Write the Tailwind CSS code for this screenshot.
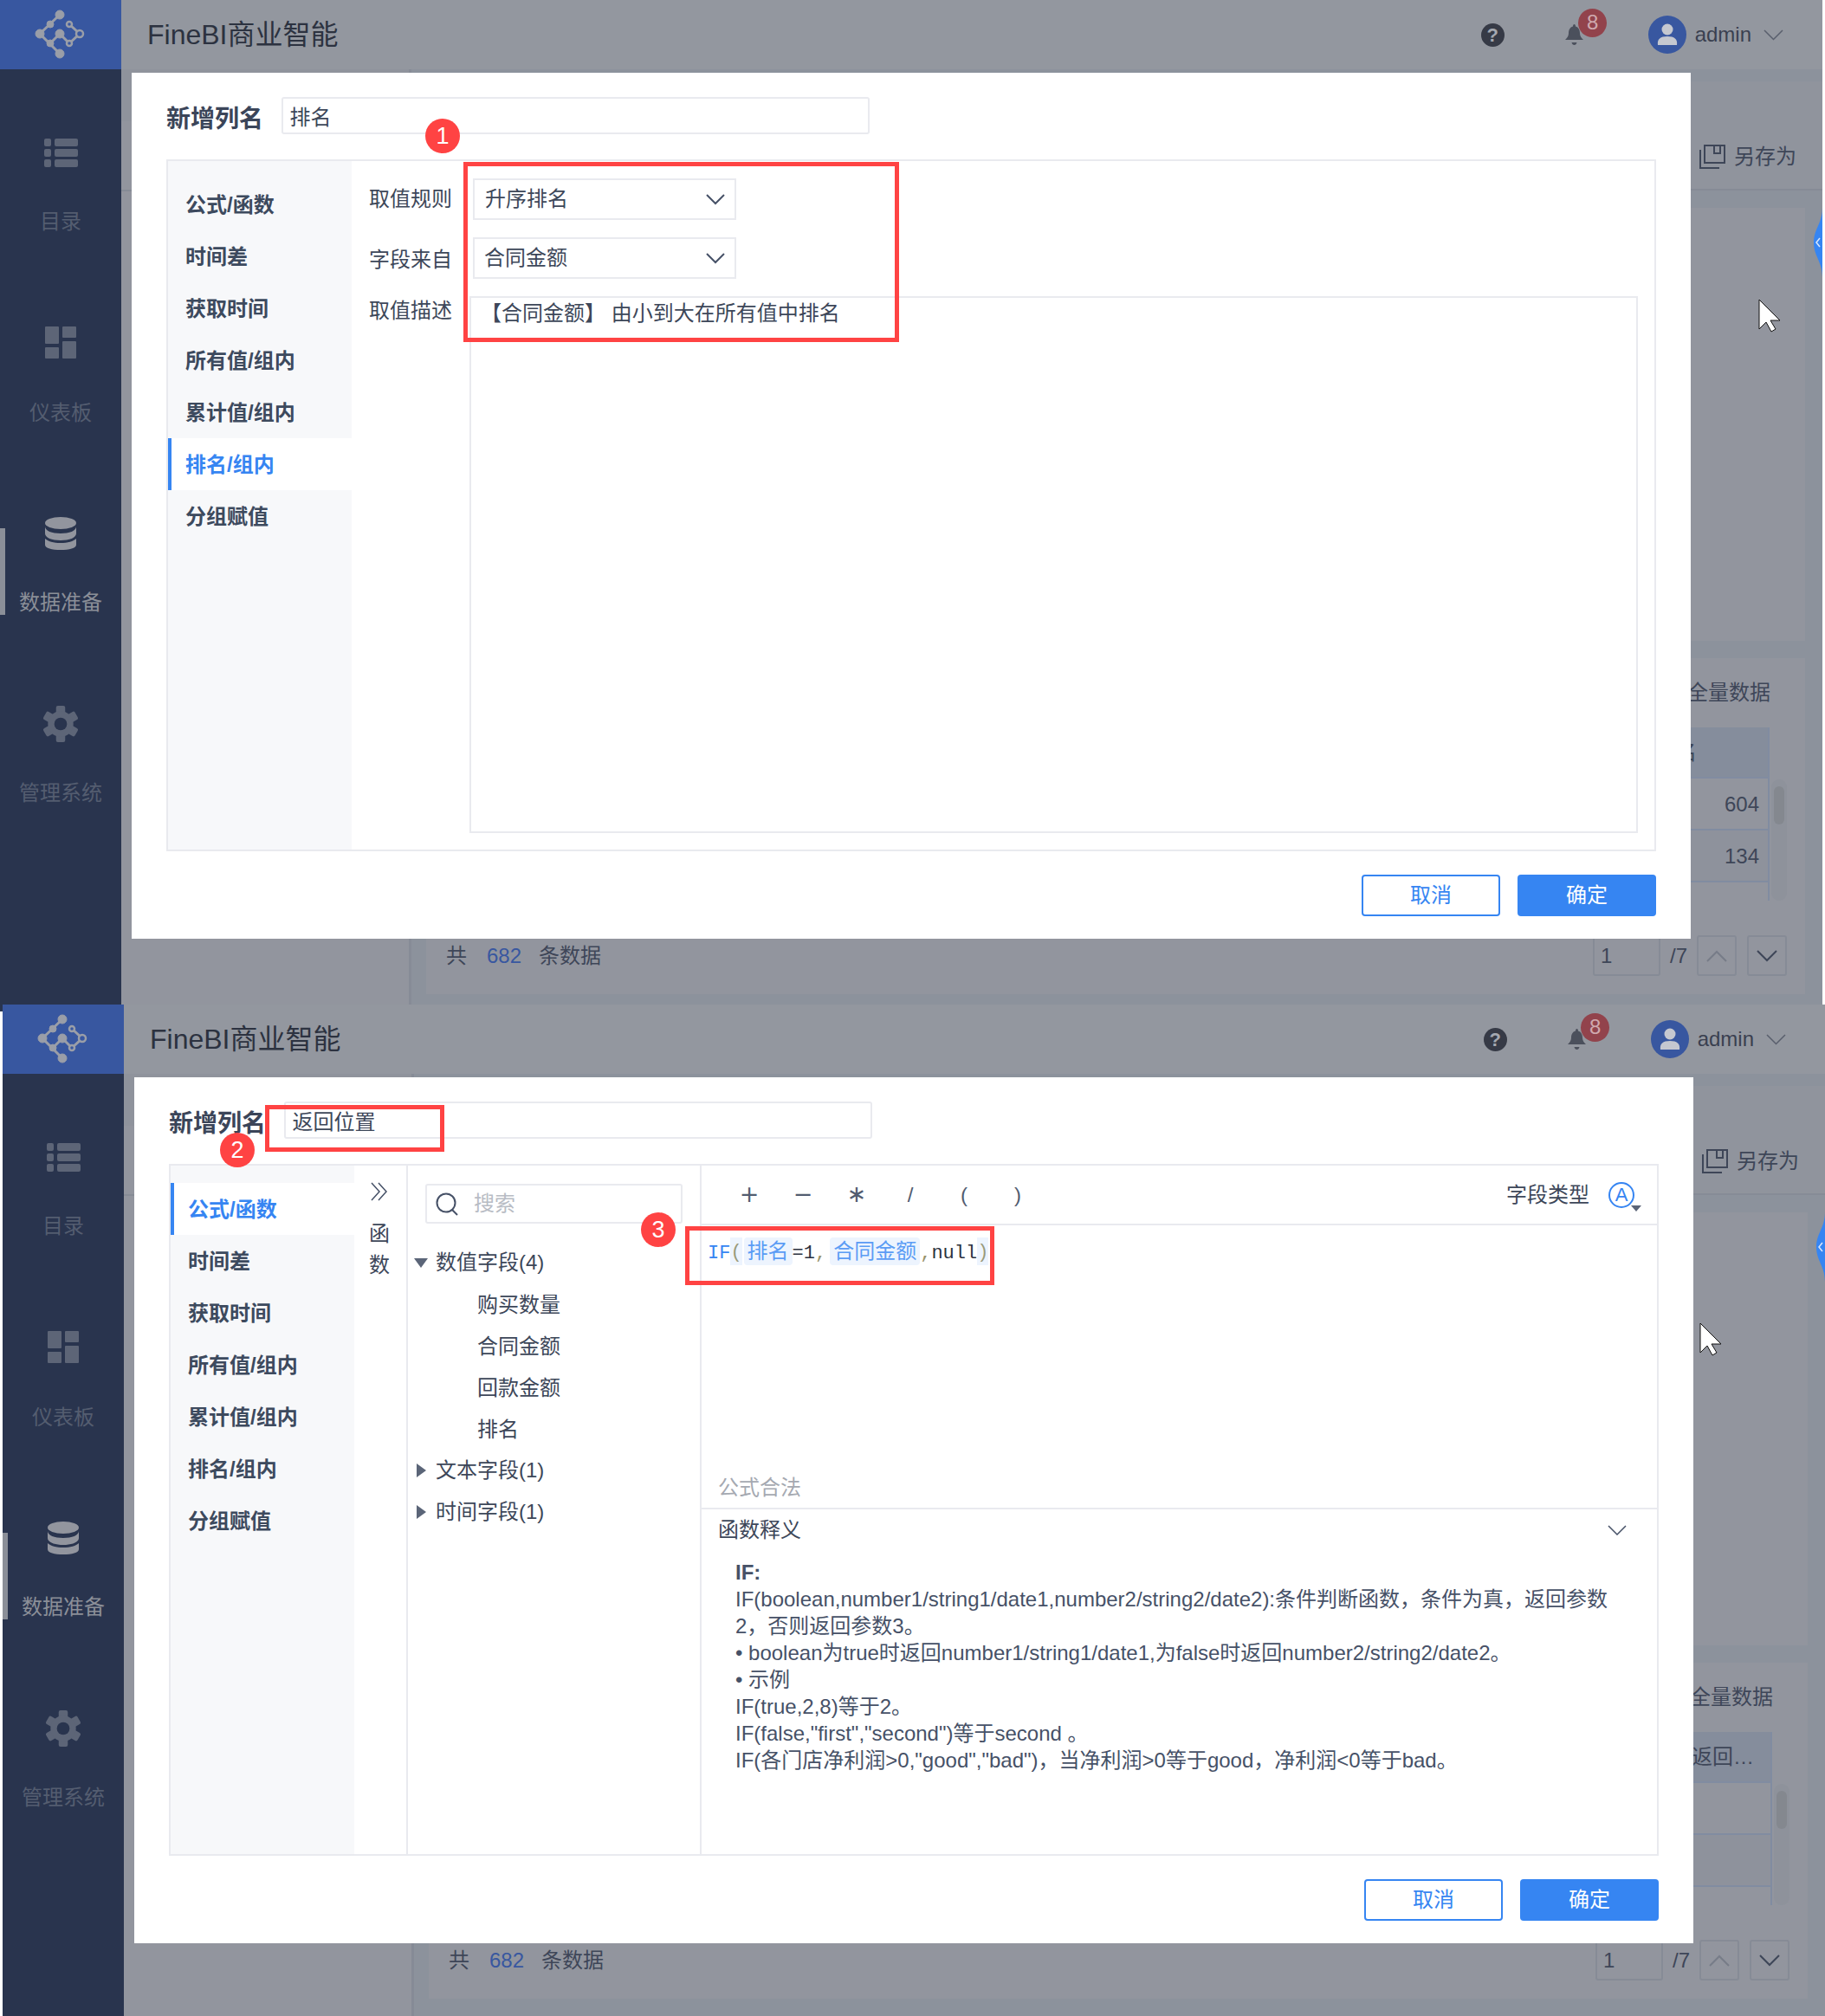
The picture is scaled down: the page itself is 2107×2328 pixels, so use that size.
<!DOCTYPE html>
<html lang="zh-CN">
<head>
<meta charset="UTF-8">
<title>FineBI商业智能</title>
<script src="https://cdn.jsdelivr.net/npm/@tailwindcss/browser@4"></script>
</head>
<body class="bg-white w-[2107px] h-[2328px] overflow-hidden font-['Liberation_Sans','Noto_Sans_CJK_SC',sans-serif] text-[24px] text-[#3d4759]">

<!-- Screen 1 -->
<section class="relative flex w-[2104px] h-[1168px] overflow-hidden bg-[#8c929c]">
  <!-- Sidebar -->
  <aside class="w-[140px] shrink-0 bg-[#29344e] flex flex-col">
    <div class="h-[80px] bg-[#3857a0] flex items-center justify-center">
      <svg class="w-[80px] h-[80px]" viewBox="0 0 80 80" fill="#9a9ea8" stroke="#9a9ea8"><path d="M39 17 16 39 39 62M28 50 39 39 50 50 62 39 50 28" fill="none" stroke-width="3"/><circle cx="39" cy="17" r="5"/><circle cx="28" cy="28" r="4"/><circle cx="16" cy="39" r="5"/><circle cx="28" cy="50" r="4"/><circle cx="39" cy="62" r="5"/><circle cx="39" cy="39" r="5"/><circle cx="50" cy="28" r="3" fill="#3857a0" stroke-width="2.5"/><circle cx="62" cy="39" r="4" fill="#3857a0" stroke-width="2.5"/><circle cx="50" cy="50" r="3" fill="#3857a0" stroke-width="2.5"/></svg>
    </div>
    <nav class="pt-[76px] flex flex-col">
      <div class="h-[220px] flex flex-col items-center text-[#545d70]">
        <svg class="w-[40px] h-[40px]" viewBox="0 0 40 40" fill="#5d6577"><rect x="1" y="4" width="8" height="9" rx="2"/><rect x="13" y="4" width="27" height="9" rx="2"/><rect x="1" y="16" width="8" height="9" rx="2"/><rect x="13" y="16" width="27" height="9" rx="2"/><rect x="1" y="28" width="8" height="9" rx="2"/><rect x="13" y="28" width="27" height="9" rx="2"/></svg>
        <span class="mt-[43px] leading-[34px]">目录</span>
      </div>
      <div class="h-[220px] flex flex-col items-center text-[#545d70]">
        <svg class="w-[40px] h-[40px]" viewBox="0 0 40 40" fill="#5d6577"><rect x="2" y="1" width="16" height="20" rx="1"/><rect x="22" y="1" width="16" height="13" rx="1"/><rect x="2" y="25" width="16" height="13" rx="1"/><rect x="22" y="18" width="16" height="20" rx="1"/></svg>
        <span class="mt-[44px] leading-[34px]">仪表板</span>
      </div>
      <div class="relative h-[220px] flex flex-col items-center text-[#8b8f98]">
        <span class="absolute left-0 top-[14px] w-[6px] h-[100px] bg-[#8b8f98]"></span>
        <svg class="w-[40px] h-[40px]" viewBox="0 0 40 40" fill="#92959e"><ellipse cx="20" cy="8" rx="18" ry="7"/><path d="M2 12c0 5 8 8 18 8s18-3 18-8v8c0 5-8 8-18 8S2 25 2 20z"/><path d="M2 26c3 3 10 5 18 5s15-2 18-5v7c0 4-8 6-18 6S2 37 2 33z"/></svg>
        <span class="mt-[43px] leading-[34px]">数据准备</span>
      </div>
      <div class="h-[220px] flex flex-col items-center text-[#545d70]">
        <svg class="w-[42px] h-[42px] -my-[1px]" viewBox="0 0 40 40" fill="#5d6577"><g><rect x="15" y="0" width="10" height="40" rx="2"/><rect x="15" y="0" width="10" height="40" rx="2" transform="rotate(60 20 20)"/><rect x="15" y="0" width="10" height="40" rx="2" transform="rotate(120 20 20)"/></g><circle cx="20" cy="20" r="14"/><circle cx="20" cy="20" r="7" fill="#29344e"/></svg>
        <span class="mt-[43px] leading-[34px]">管理系统</span>
      </div>
    </nav>
  </aside>

  <div class="flex-1 flex flex-col min-w-0">
    <!-- Header -->
    <header class="h-[80px] shrink-0 bg-[#93979f] flex items-center pl-[30px] pr-[45px]">
      <h1 class="text-[32px] text-[#2c3240] font-normal">FineBI商业智能</h1>
      <div class="ml-auto flex items-center">
        <span class="w-[27px] h-[27px] rounded-full bg-[#363a46] text-[#a4a8b0] font-bold text-[22px] leading-[27px] text-center">?</span>
        <div class="relative ml-[70.500px] w-[21px] h-[24px]">
          <svg class="w-[21px] h-[24px]" viewBox="0 0 21 24" fill="#4b505c"><path d="M10.5 0c1 0 1.500 1 1.500 2.500 3.500 1 5 4 5 8 0 3 1.500 5 4 7.500H0c2.500-2.500 4-4.500 4-7.500 0-4 1.500-7 5-8C9 1 9.500 0 10.500 0z"/><path d="M7.500 21h6c-.5 2-1.500 3-3 3s-2.500-1-3-3z"/></svg>
          <span class="absolute left-[15px] -top-[18px] w-[33px] h-[33px] rounded-full bg-[#92434c] text-[#cfa9ae] text-center text-[24px] leading-[32px]">8</span>
        </div>
        <div class="ml-[75px] w-[44px] h-[44px] rounded-full bg-[#3857a0] flex items-center justify-center">
          <svg class="w-[24px] h-[26px]" viewBox="0 0 24 26" fill="#c5c8d0"><circle cx="12" cy="7" r="6.500"/><path d="M1 25c-1-7 3-10 11-10s12 3 11 10z"/></svg>
        </div>
        <span class="ml-[9.500px] text-[#3a4050]">admin</span>
        <svg class="ml-[14px] w-[23px] h-[13px]" viewBox="0 0 23 13" fill="none" stroke="#595f6d" stroke-width="1.500"><path d="M1 1l10.500 10.500L22 1"/></svg>
      </div>
    </header>

    <!-- Page behind the dialog -->
    <div class="flex-1 flex min-h-0">
      <div class="w-[335px] shrink-0 border-r-[3px] border-[#868b96] flex flex-col">
        <div class="h-[60px] bg-[#8f939c]"></div>
        <div class="flex-1 bg-[#92959e]"><div class="h-[81px] border-b-[2px] border-[#868b96]"></div></div>
      </div>
      <div class="flex-1 flex flex-col">
        <div class="mt-[14px] h-[126px] shrink-0 bg-[#90949d] border-b-[2px] border-[#868b96] flex items-center justify-end pr-[30px] pt-[50px]">
          <svg class="w-[30px] h-[28px]" viewBox="0 0 30 28" fill="none" stroke="#3e4658" stroke-width="2"><path d="M6 1h23v20H6zM17 1v9h7V1M1 6v21h22"/></svg>
          <span class="ml-[10px] text-[#3e4658]">另存为</span>
        </div>
        <div class="mt-[20px] ml-[17px] mr-[20px] h-[500px] shrink-0 bg-[#92959e]"></div>
        <div class="mt-[20px] ml-[17px] mr-[20px] h-[388px] shrink-0 bg-[#92959e] pt-[23px] flex flex-col">
          <div class="pr-[40px] text-right leading-[34px] text-[#3e4658]">全量数据</div>
          <div class="mt-[23px] pr-[21px] flex justify-end">
            <div class="w-[500px] h-[200px] border-r-[2px] border-[#818ca1] text-[#3e4658]">
              <div class="h-[59px] bg-[#858d9c] border-b-[2px] border-[#818ca1] flex items-center justify-end pr-[82px]">排名</div>
              <div class="h-[60px] border-b-[2px] border-[#818ca1] flex items-center justify-end pr-[10px] pt-[2px]">604</div>
              <div class="h-[60px] bg-[#8e929c] border-b-[2px] border-[#818ca1] flex items-center justify-end pr-[10px] pt-[2px]">134</div>
            </div>
            <div class="ml-[2px] w-[18px] h-[140px] mt-[60px] rounded-[9px] bg-[#8e929b] px-[3px] pt-[8px]"><div class="h-[44px] rounded-[6px] bg-[#84888f]"></div></div>
          </div>
          <div class="mt-[40px] h-[47px] pl-[23px] pr-[21px] flex items-center text-[#3e4658]">
            <span>共</span><span class="ml-[23px] text-[#3857a0]">682</span><span class="ml-[20px]">条数据</span>
            <span class="ml-auto w-[78px] h-[47px] border-[2px] border-[#868b96] rounded-[3px] pl-[7px] leading-[43px]">1</span>
            <span class="ml-[11px] w-[31px]">/7</span>
            <span class="w-[46px] h-[47px] border-[2px] border-[#868b96] rounded-[3px] flex items-center justify-center"><svg class="w-[24px] h-[14px]" viewBox="0 0 24 14" fill="none" stroke="#777c88" stroke-width="2"><path d="M1 13 12 2l11 11"/></svg></span>
            <span class="ml-[12px] w-[46px] h-[47px] border-[2px] border-[#868b96] rounded-[3px] flex items-center justify-center"><svg class="w-[24px] h-[14px]" viewBox="0 0 24 14" fill="none" stroke="#3e4658" stroke-width="2"><path d="M1 1l11 11L23 1"/></svg></span>
          </div>
        </div>
      </div>
    </div>
  </div>

  <!-- Blue side tab and mouse cursor -->
  <svg class="absolute left-[2094px] top-[240px] w-[10px] h-[80px]" viewBox="0 0 10 80"><path d="M10 0C10 18 0 24 0 40s10 22 10 40z" fill="#3685f2"/><path d="M7 35l-4 5 4 5" fill="none" stroke="#dbe8fb" stroke-width="1.500"/></svg>
  <svg class="absolute left-[2030px] top-[345px] w-[27px] h-[39px]" viewBox="0 0 27 39"><path d="M1 1v34l8-8 6 11 5-3-6-10h11z" fill="#fff" stroke="#111" stroke-width="1"/></svg>

  <!-- Dialog -->
  <div class="absolute left-[152px] top-[84px] w-[1800px] h-[1000px] bg-white px-[40px] pt-[28px]">
    <div class="flex items-center h-[43px]">
      <span class="w-[132.500px] shrink-0 mt-[8px] text-[28px] font-bold text-[#3b4559]">新增列名</span>
      <div class="w-[679px] h-[43px] border-[2px] border-[#e9eaef] rounded-[3px] pl-[8px] leading-[43px] text-[#3d4759]">排名</div>
    </div>
    <div class="mt-[29px] h-[799px] border-[2px] border-[#e9eaef] flex">
      <ul class="w-[212px] shrink-0 bg-[#f7f8fa] pt-[20px] font-bold text-[#3d4a5e]">
        <li class="h-[60px] pl-[20px] pt-[1px] flex items-center">公式/函数</li>
        <li class="h-[60px] pl-[20px] pt-[1px] flex items-center">时间差</li>
        <li class="h-[60px] pl-[20px] pt-[1px] flex items-center">获取时间</li>
        <li class="h-[60px] pl-[20px] pt-[1px] flex items-center">所有值/组内</li>
        <li class="h-[60px] pl-[20px] pt-[1px] flex items-center">累计值/组内</li>
        <li class="h-[60px] pl-[16px] pt-[1px] flex items-center bg-white border-l-[4px] border-[#3685f2] text-[#3685f2]">排名/组内</li>
        <li class="h-[60px] pl-[20px] pt-[1px] flex items-center">分组赋值</li>
      </ul>
      <div class="flex-1 pl-[20px] pr-[19px] pt-[20px] flex flex-col">
        <div class="flex items-center h-[48px]">
          <span class="w-[116px] shrink-0">取值规则</span>
          <div class="ml-[4px] w-[304px] h-[48px] border-[2px] border-[#e9eaef] flex items-center justify-between pl-[12px] pr-[11px]">升序排名
            <svg class="w-[22px] h-[13px]" viewBox="0 0 22 13" fill="none" stroke="#465167" stroke-width="2"><path d="M1 1l10 10L21 1"/></svg></div>
        </div>
        <div class="mt-[20px] flex items-center h-[48px]">
          <span class="w-[116px] shrink-0 mt-[4px]">字段来自</span>
          <div class="ml-[4px] w-[304px] h-[48px] border-[2px] border-[#e9eaef] flex items-center justify-between pl-[11px] pr-[11px]">合同金额
            <svg class="w-[22px] h-[13px]" viewBox="0 0 22 13" fill="none" stroke="#465167" stroke-width="2"><path d="M1 1l10 10L21 1"/></svg></div>
        </div>
        <div class="mt-[20px] flex">
          <span class="w-[116px] shrink-0 leading-[34px]">取值描述</span>
          <div class="flex-1 h-[620px] border-[2px] border-[#e9eaef] pl-[11px] leading-[35px]">【合同金额】 由小到大在所有值中排名</div>
        </div>
      </div>
    </div>
    <div class="mt-[27px] flex justify-end gap-[20px]">
      <button class="w-[160px] h-[48px] border-[2px] border-[#3685f2] rounded-[4px] text-[#3685f2]">取消</button>
      <button class="w-[160px] h-[48px] bg-[#3685f2] rounded-[4px] text-white">确定</button>
    </div>
    <!-- Annotation -->
    <span class="absolute left-[383px] top-[103px] w-[503px] h-[208px] border-[5px] border-[#ff4343]"></span>
    <span class="absolute left-[339px] top-[53px] w-[40px] h-[40px] rounded-full bg-[#ff4343] text-white text-[27px] leading-[40px] text-center">1</span>
  </div>
</section>

<!-- Screen 2 -->
<section class="relative ml-[3px] -mt-[8px] flex w-[2104px] h-[1168px] overflow-hidden bg-[#8c929c]">
  <aside class="w-[140px] shrink-0 bg-[#29344e] flex flex-col">
    <div class="h-[80px] bg-[#3857a0] flex items-center justify-center">
      <svg class="w-[80px] h-[80px]" viewBox="0 0 80 80" fill="#9a9ea8" stroke="#9a9ea8"><path d="M39 17 16 39 39 62M28 50 39 39 50 50 62 39 50 28" fill="none" stroke-width="3"/><circle cx="39" cy="17" r="5"/><circle cx="28" cy="28" r="4"/><circle cx="16" cy="39" r="5"/><circle cx="28" cy="50" r="4"/><circle cx="39" cy="62" r="5"/><circle cx="39" cy="39" r="5"/><circle cx="50" cy="28" r="3" fill="#3857a0" stroke-width="2.5"/><circle cx="62" cy="39" r="4" fill="#3857a0" stroke-width="2.5"/><circle cx="50" cy="50" r="3" fill="#3857a0" stroke-width="2.5"/></svg>
    </div>
    <nav class="pt-[76px] flex flex-col">
      <div class="h-[220px] flex flex-col items-center text-[#545d70]">
        <svg class="w-[40px] h-[40px]" viewBox="0 0 40 40" fill="#5d6577"><rect x="1" y="4" width="8" height="9" rx="2"/><rect x="13" y="4" width="27" height="9" rx="2"/><rect x="1" y="16" width="8" height="9" rx="2"/><rect x="13" y="16" width="27" height="9" rx="2"/><rect x="1" y="28" width="8" height="9" rx="2"/><rect x="13" y="28" width="27" height="9" rx="2"/></svg>
        <span class="mt-[43px] leading-[34px]">目录</span>
      </div>
      <div class="h-[220px] flex flex-col items-center text-[#545d70]">
        <svg class="w-[40px] h-[40px]" viewBox="0 0 40 40" fill="#5d6577"><rect x="2" y="1" width="16" height="20" rx="1"/><rect x="22" y="1" width="16" height="13" rx="1"/><rect x="2" y="25" width="16" height="13" rx="1"/><rect x="22" y="18" width="16" height="20" rx="1"/></svg>
        <span class="mt-[44px] leading-[34px]">仪表板</span>
      </div>
      <div class="relative h-[220px] flex flex-col items-center text-[#8b8f98]">
        <span class="absolute left-0 top-[14px] w-[6px] h-[100px] bg-[#8b8f98]"></span>
        <svg class="w-[40px] h-[40px]" viewBox="0 0 40 40" fill="#92959e"><ellipse cx="20" cy="8" rx="18" ry="7"/><path d="M2 12c0 5 8 8 18 8s18-3 18-8v8c0 5-8 8-18 8S2 25 2 20z"/><path d="M2 26c3 3 10 5 18 5s15-2 18-5v7c0 4-8 6-18 6S2 37 2 33z"/></svg>
        <span class="mt-[43px] leading-[34px]">数据准备</span>
      </div>
      <div class="h-[220px] flex flex-col items-center text-[#545d70]">
        <svg class="w-[42px] h-[42px] -my-[1px]" viewBox="0 0 40 40" fill="#5d6577"><g><rect x="15" y="0" width="10" height="40" rx="2"/><rect x="15" y="0" width="10" height="40" rx="2" transform="rotate(60 20 20)"/><rect x="15" y="0" width="10" height="40" rx="2" transform="rotate(120 20 20)"/></g><circle cx="20" cy="20" r="14"/><circle cx="20" cy="20" r="7" fill="#29344e"/></svg>
        <span class="mt-[43px] leading-[34px]">管理系统</span>
      </div>
    </nav>
  </aside>

  <div class="flex-1 flex flex-col min-w-0">
    <header class="h-[80px] shrink-0 bg-[#93979f] flex items-center pl-[30px] pr-[45px]">
      <h1 class="text-[32px] text-[#2c3240] font-normal">FineBI商业智能</h1>
      <div class="ml-auto flex items-center">
        <span class="w-[27px] h-[27px] rounded-full bg-[#363a46] text-[#a4a8b0] font-bold text-[22px] leading-[27px] text-center">?</span>
        <div class="relative ml-[70.500px] w-[21px] h-[24px]">
          <svg class="w-[21px] h-[24px]" viewBox="0 0 21 24" fill="#4b505c"><path d="M10.5 0c1 0 1.500 1 1.500 2.500 3.500 1 5 4 5 8 0 3 1.500 5 4 7.500H0c2.500-2.500 4-4.500 4-7.500 0-4 1.500-7 5-8C9 1 9.500 0 10.500 0z"/><path d="M7.500 21h6c-.5 2-1.500 3-3 3s-2.500-1-3-3z"/></svg>
          <span class="absolute left-[15px] -top-[18px] w-[33px] h-[33px] rounded-full bg-[#92434c] text-[#cfa9ae] text-center text-[24px] leading-[32px]">8</span>
        </div>
        <div class="ml-[75px] w-[44px] h-[44px] rounded-full bg-[#3857a0] flex items-center justify-center">
          <svg class="w-[24px] h-[26px]" viewBox="0 0 24 26" fill="#c5c8d0"><circle cx="12" cy="7" r="6.500"/><path d="M1 25c-1-7 3-10 11-10s12 3 11 10z"/></svg>
        </div>
        <span class="ml-[9.500px] text-[#3a4050]">admin</span>
        <svg class="ml-[14px] w-[23px] h-[13px]" viewBox="0 0 23 13" fill="none" stroke="#595f6d" stroke-width="1.500"><path d="M1 1l10.500 10.500L22 1"/></svg>
      </div>
    </header>

    <div class="flex-1 flex min-h-0">
      <div class="w-[335px] shrink-0 border-r-[3px] border-[#868b96] flex flex-col">
        <div class="h-[60px] bg-[#8f939c]"></div>
        <div class="flex-1 bg-[#92959e]"><div class="h-[81px] border-b-[2px] border-[#868b96]"></div></div>
      </div>
      <div class="flex-1 flex flex-col">
        <div class="mt-[14px] h-[126px] shrink-0 bg-[#90949d] border-b-[2px] border-[#868b96] flex items-center justify-end pr-[30px] pt-[50px]">
          <svg class="w-[30px] h-[28px]" viewBox="0 0 30 28" fill="none" stroke="#3e4658" stroke-width="2"><path d="M6 1h23v20H6zM17 1v9h7V1M1 6v21h22"/></svg>
          <span class="ml-[10px] text-[#3e4658]">另存为</span>
        </div>
        <div class="mt-[20px] ml-[17px] mr-[20px] h-[500px] shrink-0 bg-[#92959e]"></div>
        <div class="mt-[20px] ml-[17px] mr-[20px] h-[388px] shrink-0 bg-[#92959e] pt-[23px] flex flex-col">
          <div class="pr-[40px] text-right leading-[34px] text-[#3e4658]">全量数据</div>
          <div class="mt-[23px] pr-[21px] flex justify-end">
            <div class="w-[500px] h-[200px] border-r-[2px] border-[#818ca1] text-[#3e4658]">
              <div class="h-[59px] bg-[#858d9c] border-b-[2px] border-[#818ca1] flex items-center justify-end pr-[19px]">返回…</div>
              <div class="h-[60px] border-b-[2px] border-[#818ca1]"></div>
              <div class="h-[60px] bg-[#8e929c] border-b-[2px] border-[#818ca1]"></div>
            </div>
            <div class="ml-[2px] w-[18px] h-[140px] mt-[60px] rounded-[9px] bg-[#8e929b] px-[3px] pt-[8px]"><div class="h-[44px] rounded-[6px] bg-[#84888f]"></div></div>
          </div>
          <div class="mt-[40px] h-[47px] pl-[23px] pr-[21px] flex items-center text-[#3e4658]">
            <span>共</span><span class="ml-[23px] text-[#3857a0]">682</span><span class="ml-[20px]">条数据</span>
            <span class="ml-auto w-[78px] h-[47px] border-[2px] border-[#868b96] rounded-[3px] pl-[7px] leading-[43px]">1</span>
            <span class="ml-[11px] w-[31px]">/7</span>
            <span class="w-[46px] h-[47px] border-[2px] border-[#868b96] rounded-[3px] flex items-center justify-center"><svg class="w-[24px] h-[14px]" viewBox="0 0 24 14" fill="none" stroke="#777c88" stroke-width="2"><path d="M1 13 12 2l11 11"/></svg></span>
            <span class="ml-[12px] w-[46px] h-[47px] border-[2px] border-[#868b96] rounded-[3px] flex items-center justify-center"><svg class="w-[24px] h-[14px]" viewBox="0 0 24 14" fill="none" stroke="#3e4658" stroke-width="2"><path d="M1 1l11 11L23 1"/></svg></span>
          </div>
        </div>
      </div>
    </div>
  </div>

  <svg class="absolute left-[2094px] top-[240px] w-[10px] h-[80px]" viewBox="0 0 10 80"><path d="M10 0C10 18 0 24 0 40s10 22 10 40z" fill="#3685f2"/><path d="M7 35l-4 5 4 5" fill="none" stroke="#dbe8fb" stroke-width="1.500"/></svg>
  <svg class="absolute left-[1959px] top-[367px] w-[27px] h-[39px]" viewBox="0 0 27 39"><path d="M1 1v34l8-8 6 11 5-3-6-10h11z" fill="#fff" stroke="#111" stroke-width="1"/></svg>

  <div class="absolute left-[152px] top-[84px] w-[1800px] h-[1000px] bg-white px-[40px] pt-[28px]">
    <div class="flex items-center h-[43px]">
      <span class="w-[132.500px] shrink-0 mt-[8px] text-[28px] font-bold text-[#3b4559]">新增列名</span>
      <div class="w-[679px] h-[43px] border-[2px] border-[#e9eaef] rounded-[3px] pl-[8px] leading-[43px] text-[#3d4759]">返回位置</div>
    </div>
    <div class="mt-[29px] h-[799px] border-[2px] border-[#e9eaef] flex">
      <ul class="w-[212px] shrink-0 bg-[#f7f8fa] pt-[20px] font-bold text-[#3d4a5e]">
        <li class="h-[60px] pl-[16px] pt-[1px] flex items-center bg-white border-l-[4px] border-[#3685f2] text-[#3685f2]">公式/函数</li>
        <li class="h-[60px] pl-[20px] pt-[1px] flex items-center">时间差</li>
        <li class="h-[60px] pl-[20px] pt-[1px] flex items-center">获取时间</li>
        <li class="h-[60px] pl-[20px] pt-[1px] flex items-center">所有值/组内</li>
        <li class="h-[60px] pl-[20px] pt-[1px] flex items-center">累计值/组内</li>
        <li class="h-[60px] pl-[20px] pt-[1px] flex items-center">排名/组内</li>
        <li class="h-[60px] pl-[20px] pt-[1px] flex items-center">分组赋值</li>
      </ul>
      <!-- Collapsed function column -->
      <div class="w-[62px] shrink-0 border-r-[2px] border-[#e9eaef] flex flex-col items-center pr-[2px]">
        <svg class="mt-[19px] w-[20px] h-[22px]" viewBox="0 0 20 22" fill="none" stroke="#465167" stroke-width="1.500"><path d="M1 1l9 10-9 10M9 1l9 10-9 10"/></svg>
        <span class="mt-[20px] leading-[36px]">函</span>
        <span class="leading-[36px]">数</span>
      </div>
      <!-- Field tree -->
      <div class="w-[339px] shrink-0 border-r-[2px] border-[#e9eaef]">
        <div class="mt-[21px] ml-[20px] w-[297px] h-[46px] border-[2px] border-[#e9eaef] rounded-[3px] flex items-center pl-[10px] text-[#b8bcc4]">
          <svg class="w-[27px] h-[27px]" viewBox="0 0 27 27" fill="none" stroke="#465167" stroke-width="2"><circle cx="12" cy="12" r="10.500"/><path d="M19 20l6 6"/></svg>
          <span class="ml-[17px]">搜索</span>
        </div>
        <div class="mt-[21px] h-[48px] pl-[7px] flex items-center"><svg class="w-[16px] h-[11px]" viewBox="0 0 16 11" fill="#5b6578"><path d="M0 0h16l-8 11z"/></svg><span class="ml-[9px]">数值字段(4)</span></div>
        <div class="h-[48px] pl-[80px] pt-[1px] flex items-center">购买数量</div>
        <div class="h-[48px] pl-[80px] pt-[1px] flex items-center">合同金额</div>
        <div class="h-[48px] pl-[80px] pt-[1px] flex items-center">回款金额</div>
        <div class="h-[48px] pl-[80px] pt-[1px] flex items-center">排名</div>
        <div class="h-[48px] pl-[10px] flex items-center"><svg class="w-[11px] h-[16px]" viewBox="0 0 11 16" fill="#5b6578"><path d="M0 0l11 8-11 8z"/></svg><span class="ml-[11px]">文本字段(1)</span></div>
        <div class="h-[48px] pl-[10px] flex items-center"><svg class="w-[11px] h-[16px]" viewBox="0 0 11 16" fill="#5b6578"><path d="M0 0l11 8-11 8z"/></svg><span class="ml-[11px]">时间字段(1)</span></div>
      </div>
      <!-- Formula editor -->
      <div class="flex-1 flex flex-col min-w-0">
        <div class="h-[69px] shrink-0 border-b-[2px] border-[#e9eaef] flex items-center pl-[24px] pr-[18px] text-[#525c70]">
          <span class="w-[62px] text-center font-['DejaVu_Sans'] text-[27px]">+</span>
          <span class="w-[62px] text-center font-['DejaVu_Sans'] text-[27px]">−</span>
          <span class="w-[62px] text-center font-['DejaVu_Sans'] text-[27px]">∗</span>
          <span class="w-[62px] text-center">/</span>
          <span class="w-[62px] text-center">(</span>
          <span class="w-[62px] text-center">)</span>
          <span class="ml-auto text-[#3d4759]">字段类型</span>
          <span class="relative ml-[22px] w-[38px] h-[30px]">
            <span class="block w-[30px] h-[30px] rounded-full border-[2px] border-[#3685f2] text-[#3685f2] text-[22px] leading-[26px] text-center">A</span>
            <svg class="absolute left-[26px] top-[27px] w-[12px] h-[7px]" viewBox="0 0 12 7" fill="#5b6578"><path d="M0 0h12l-6 7z"/></svg>
          </span>
        </div>
        <div class="h-[328px] shrink-0 border-b-[2px] border-[#e9eaef] flex flex-col justify-between">
          <div class="pt-[14px] pl-[7px] flex items-center h-[46px] text-[22px] font-['Liberation_Mono','Noto_Sans_CJK_SC',monospace] whitespace-nowrap text-[#2c3240]">
            <span class="pt-[4px] text-[#3685f2]">IF</span><span class="h-[32px] leading-[36px] bg-[#edf4fe] text-[#9a9a7a]">(</span><span class="ml-[2px] w-[56px] h-[32px] rounded-[4px] bg-[#edf4fe] text-[#5b9cf5] text-[24px] leading-[36px] text-center">排名</span><span class="pt-[4px]">=1</span><span class="pt-[4px] mr-[4px] text-[#99936b]">,</span><span class="w-[104px] h-[32px] rounded-[4px] bg-[#edf4fe] text-[#5b9cf5] text-[24px] leading-[36px] text-center">合同金额</span><span class="pt-[4px] text-[#99936b]">,</span><span class="pt-[4px]">null</span><span class="h-[32px] leading-[36px] bg-[#edf4fe] text-[#9a9a7a]">)</span>
          </div>
          <div class="pl-[19px] pb-[6px] leading-[34px] text-[#a5a9b1]">公式合法</div>
        </div>
        <div class="h-[48px] shrink-0 pl-[19px] pr-[35px] flex items-center justify-between">函数释义
          <svg class="w-[22px] h-[12px]" viewBox="0 0 22 12" fill="none" stroke="#465167" stroke-width="1.500"><path d="M1 1l10 10L21 1"/></svg></div>
        <div class="mt-[9px] pl-[39px] leading-[31px] whitespace-nowrap text-[#465167]">
          <p class="font-bold">IF:</p>
          <p>IF(boolean,number1/string1/date1,number2/string2/date2):条件判断函数，条件为真，返回参数</p>
          <p>2，否则返回参数3。</p>
          <p>• boolean为true时返回number1/string1/date1,为false时返回number2/string2/date2。</p>
          <p>• 示例</p>
          <p>IF(true,2,8)等于2。</p>
          <p>IF(false,"first","second")等于second 。</p>
          <p>IF(各门店净利润&gt;0,"good","bad")，当净利润&gt;0等于good，净利润&lt;0等于bad。</p>
        </div>
      </div>
    </div>
    <div class="mt-[27px] flex justify-end gap-[20px]">
      <button class="w-[160px] h-[48px] border-[2px] border-[#3685f2] rounded-[4px] text-[#3685f2]">取消</button>
      <button class="w-[160px] h-[48px] bg-[#3685f2] rounded-[4px] text-white">确定</button>
    </div>
    <!-- Annotations -->
    <span class="absolute left-[151px] top-[32px] w-[207px] h-[54px] border-[5px] border-[#ff4343]"></span>
    <span class="absolute left-[636px] top-[172px] w-[357px] h-[68px] border-[5px] border-[#ff4343]"></span>
    <span class="absolute left-[99px] top-[64px] w-[40px] h-[40px] rounded-full bg-[#ff4343] text-white text-[27px] leading-[40px] text-center">2</span>
    <span class="absolute left-[585px] top-[156px] w-[40px] h-[40px] rounded-full bg-[#ff4343] text-white text-[27px] leading-[40px] text-center">3</span>
  </div>
</section>
</body>
</html>
